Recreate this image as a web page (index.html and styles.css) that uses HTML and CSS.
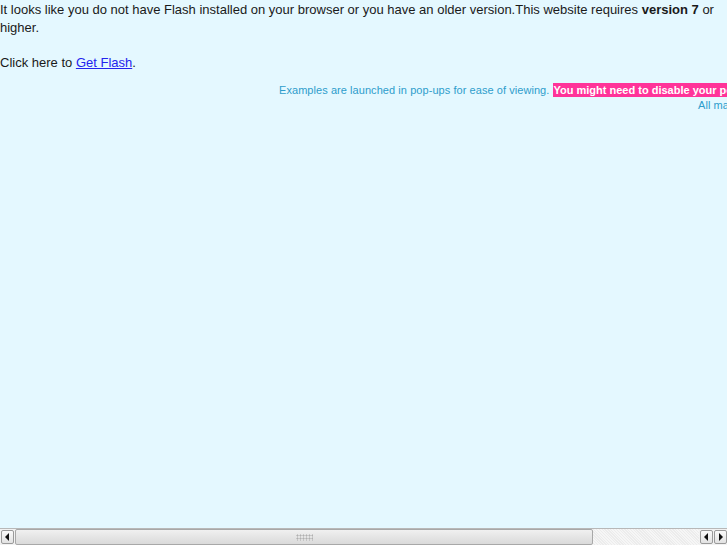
FILE: index.html
```html
<!DOCTYPE html>
<html>
<head>
<meta charset="utf-8">
<link rel="stylesheet" href="styles.css">
</head>
<body>
<div class="page">
  <p class="msg">It looks like you do not have Flash installed on your browser or you have an older version.This website requires <b>version 7</b> or higher.</p>
  <p class="msg">Click here to <a href="#">Get Flash</a>.</p>
  <div class="note">
    <div class="line1">Examples are launched in pop-ups for ease of viewing. <span class="warn">You might need to disable your pop-up blocker.</span></div>
    <div class="line2">All major browsers are supported.</div>
  </div>
</div>
<div class="hscroll">
  <div class="btn left"><svg width="5" height="8" viewBox="0 0 5 8"><path d="M4 0V8L0 4Z" fill="#111"/></svg></div>
  <div class="thumb"><span class="grip"></span></div>
  <div class="trough"></div>
  <div class="btn left"><svg width="5" height="8" viewBox="0 0 5 8"><path d="M4 0V8L0 4Z" fill="#111"/></svg></div>
  <div class="btn right"><svg width="5" height="8" viewBox="0 0 5 8"><path d="M1 0V8L5 4Z" fill="#111"/></svg></div>
</div>
</body>
</html>
```
FILE: styles.css
```css
html, body {
  margin: 0;
  padding: 0;
  height: 100%;
  overflow: hidden;
  background: #e4f8ff;
}
.page {
  font-family: "Liberation Sans", Arial, sans-serif;
  font-size: 13px;
  line-height: 18px;
  color: #1a1a1a;
  width: 727px;
  padding-top: 1px;
}
.msg {
  margin: 0 0 17px 0;
}
.msg a {
  color: #2323ee;
  text-decoration: underline;
}
.note {
  font-size: 11px;
  line-height: 15px;
  color: #2e9dcc;
  white-space: nowrap;
  margin-top: -6px;
  letter-spacing: 0.06px;
}
.line1 {
  padding-left: 279px;
}
.warn {
  background: #ff3399;
  color: #fff;
  font-weight: bold;
  padding: 1px 1px;
  letter-spacing: 0;
}
.line2 {
  padding-left: 698px;
}
.hscroll {
  position: fixed;
  left: 0;
  right: 0;
  bottom: 0;
  height: 17px;
  display: flex;
  background: #f2f2f2;
  border-top: 1px solid #b8b8b8;
  box-sizing: border-box;
}
.btn {
  width: 13px;
  height: 14px;
  margin: 1px 0 0 1px;
  border: 1px solid #9a9a9a;
  border-radius: 2px;
  background: linear-gradient(#fafafa, #e2e2e2);
  display: flex;
  align-items: center;
  justify-content: center;
  box-sizing: border-box;
}
.thumb {
  width: 578px;
  margin: 0 0 0 1px;
  height: 16px;
  border: 1px solid #a8a8a8;
  border-radius: 2px;
  background: linear-gradient(#f0f0f0, #dadada);
  box-sizing: border-box;
  display: flex;
  justify-content: center;
  align-items: center;
}
.grip {
  width: 17px;
  height: 7px;
  background-image: radial-gradient(#b0b0b0 45%, transparent 50%);
  background-size: 3px 3px;
  margin-left: 0;
}
.trough {
  flex: 1;
  background: repeating-linear-gradient(45deg, #f6f6f6 0 1px, #ececec 1px 2px);
}
```
